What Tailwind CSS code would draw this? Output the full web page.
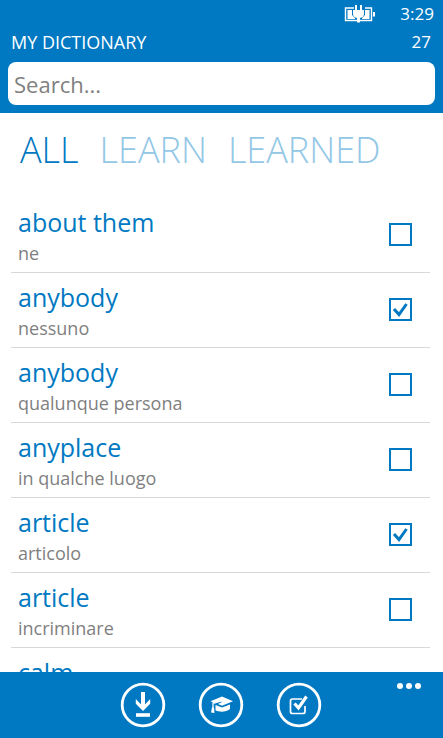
<!DOCTYPE html>
<html lang="en">
<head>
<meta charset="utf-8">
<meta name="viewport" content="width=device-width, initial-scale=1">
<title>My Dictionary</title>
<script src="https://cdn.jsdelivr.net/npm/@tailwindcss/browser@4"></script>
</head>
<body class="flex h-dvh flex-col overflow-hidden bg-white font-['Open_Sans','Noto_Sans',sans-serif] text-[#0079c2]">
<header class="shrink-0 bg-[#0079c2] px-2 pb-2 text-white">
  <div class="flex h-7 items-center justify-end gap-6 pr-px">
    <svg class="h-5 w-8" viewBox="0 0 32 20" fill="none" aria-label="Charging">
      <path d="M10 4H1.500v12.500h26V4H21" stroke="#fff" stroke-width="1.400"/>
      <path d="M3.500 6H8v5l3 3v1H3.500zM21 6h4.500v9H18v-1l3-3z" fill="#fff"/>
      <path d="M29 8h2v4.500h-2z" fill="#fff"/>
      <path d="M11 1h2v5h3V1h2v5h2v4c0 2.200-1.700 3.700-4 4v4.500h-3V14c-2.300-.3-4-1.800-4-4V6h2z" fill="#fff"/>
    </svg>
    <time class="text-[17px]">3:29</time>
  </div>
  <div class="flex h-[34px] items-center justify-between pr-1 pb-[6px] pl-[3px]">
    <h1 class="text-[18px]">MY DICTIONARY</h1>
    <span class="text-[17px]">27</span>
  </div>
  <input type="search" aria-label="Search" placeholder="Search..." class="block h-[43px] w-full rounded-lg bg-white px-[6px] text-[22px] text-gray-700 outline-none placeholder:text-[#808080]">
</header>
<nav class="flex h-[85px] shrink-0 items-start gap-[21px] px-5 pt-[13px] text-[36px] leading-[48px] font-light whitespace-nowrap">
  <a href="#all" aria-current="page">ALL</a>
  <a href="#learn" class="text-[#93c7e6]">LEARN</a>
  <a href="#learned" class="text-[#93c7e6]">LEARNED</a>
</nav>
<main class="min-h-0 flex-1 overflow-hidden pr-[13px] pl-[11px]">
  <ul id="words"></ul>
</main>
<footer class="relative flex h-[66px] shrink-0 items-center justify-center gap-8 bg-[#0079c2] pr-[2px] text-white">
  <button type="button" aria-label="Download" class="size-[46px]">
    <svg class="size-full" viewBox="0 0 46 46" fill="none" stroke="#fff">
      <circle cx="23" cy="23" r="20.800" stroke-width="2.800"/>
      <path d="M23 10v17" stroke-width="4"/>
      <path d="M15.800 17l7.200 7.500 7.200-7.500v4.800L23 29l-7.200-7.200z" fill="#fff" stroke="none"/>
      <path d="M16 33h14" stroke-width="3.600"/>
    </svg>
  </button>
  <button type="button" aria-label="Learn" class="size-[46px]">
    <svg class="size-full" viewBox="0 0 46 46" fill="none" stroke="#fff">
      <circle cx="23" cy="23" r="20.800" stroke-width="2.800"/>
      <path d="M12.500 19.200L24 14.500l11 4.700-11 4.500-4-1.600 4-2-.5-1-6.500 2.300z" fill="#fff" stroke="none"/>
      <path d="M17.500 23l6.500 2.500 8-3V27c-4 3-10 3.500-14.500 1.200z" fill="#fff" stroke="none"/>
      <path d="M24 18.800l-9 2.200v6" stroke-width="1.300"/>
      <path d="M14 25.500h2l.5 5.500-3.500-.5z" fill="#fff" stroke="none"/>
    </svg>
  </button>
  <button type="button" aria-label="Select" class="size-[46px]">
    <svg class="size-full" viewBox="0 0 46 46" fill="none" stroke="#fff">
      <circle cx="23" cy="23" r="20.800" stroke-width="2.800"/>
      <path d="M26 17H16.500q-2 0-2 2v10.500q0 2 2 2H27q2 0 2-2V24" stroke-width="1.700"/>
      <path d="M18.500 21.500l4 4.500 8-11.500" stroke-width="3.200"/>
    </svg>
  </button>
  <button type="button" aria-label="More" class="absolute top-2 right-[22px] flex h-3 items-center gap-[3px]">
    <span class="size-[6px] rounded-full bg-white"></span>
    <span class="size-[6px] rounded-full bg-white"></span>
    <span class="size-[6px] rounded-full bg-white"></span>
  </button>
</footer>
<template id="row">
  <li>
    <label class="flex h-[75px] items-start justify-between border-b border-[#d8d8d8] pt-[6px] pr-[18px] pl-[7px]">
      <span class="flex flex-col">
        <span class="word text-[25px] leading-[37px]"></span>
        <span class="meaning text-[18px] leading-6 text-[#7f7f7f]"></span>
      </span>
      <span class="grid pt-[19px]">
        <input type="checkbox" class="peer col-start-1 row-start-1 size-[23px] appearance-none border-2 border-[#0079c2] bg-white">
        <svg class="pointer-events-none invisible col-start-1 row-start-1 size-[23px] peer-checked:visible" viewBox="0 0 23 23" fill="none" stroke="#0079c2" stroke-width="3"><path d="M5 11l5 5.500L17.500 6"/></svg>
      </span>
    </label>
  </li>
</template>
<script>
  const entries = [
    ["about them", "ne", false],
    ["anybody", "nessuno", true],
    ["anybody", "qualunque persona", false],
    ["anyplace", "in qualche luogo", false],
    ["article", "articolo", true],
    ["article", "incriminare", false],
    ["calm", "", false],
  ];
  const list = document.getElementById("words");
  const row = document.getElementById("row");
  for (const [word, meaning, learned] of entries) {
    const item = row.content.cloneNode(true);
    item.querySelector(".word").textContent = word;
    item.querySelector(".meaning").textContent = meaning;
    item.querySelector("input").checked = learned;
    list.append(item);
  }
</script>
</body>
</html>
